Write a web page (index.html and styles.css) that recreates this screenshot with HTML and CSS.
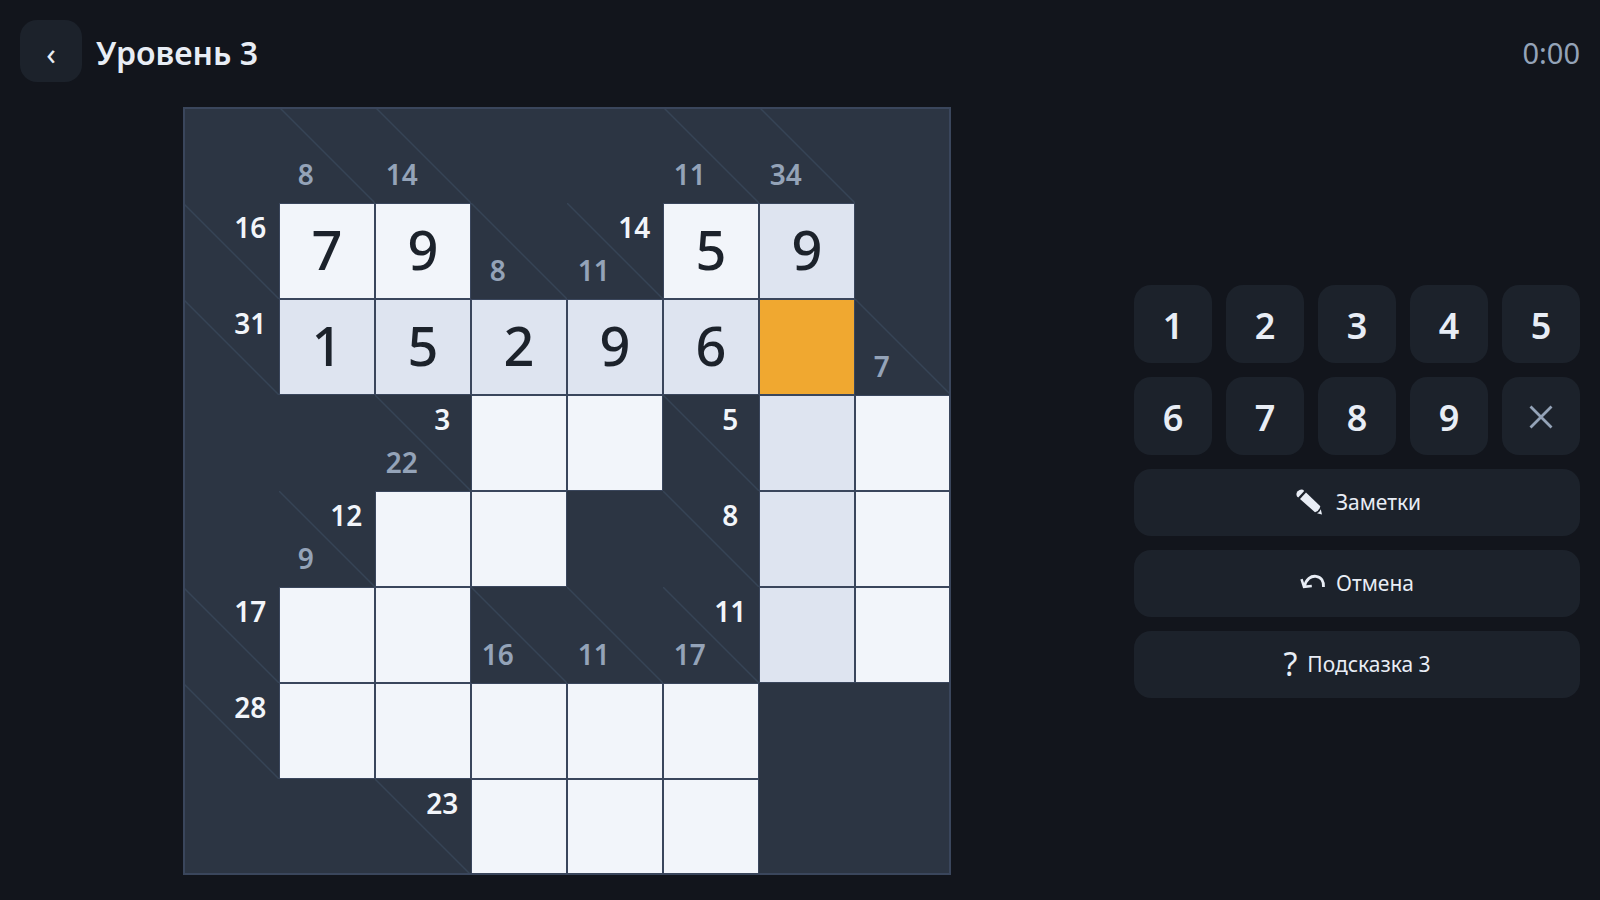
FILE: index.html
```html
<!DOCTYPE html>
<html lang="ru">

<head>
  <meta charset="utf-8">
  <meta name="viewport" content="width=device-width, initial-scale=1">
  <title>Какуро</title>
  <link rel="stylesheet" href="styles.css">
</head>

<body>
  <header class="topbar">
    <button class="back" aria-label="Назад">‹</button>
    <h1 class="title">Уровень 3</h1>
    <span class="timer">0:00</span>
  </header>

  <main class="game">
    <div class="board-wrap">
      <div id="board" class="board"></div>
    </div>

    <div class="controls">
      <div class="keypad">
        <button class="key">1</button>
        <button class="key">2</button>
        <button class="key">3</button>
        <button class="key">4</button>
        <button class="key">5</button>
        <button class="key">6</button>
        <button class="key">7</button>
        <button class="key">8</button>
        <button class="key">9</button>
        <button class="key erase" aria-label="Стереть">
          <svg width="24" height="24" viewBox="0 0 24 24">
            <path d="M1.500 1.500L22.500 22.500M22.500 1.500L1.500 22.500" fill="none" stroke="currentColor" stroke-width="2.8" />
          </svg>
        </button>
      </div>
      <button class="action">
        <svg width="33" height="28" viewBox="0 0 33 28">
          <g fill="currentColor" transform="translate(3 1)">
            <path d="M1 7.500Q-.5 4.500 1.700 2.200Q4 0 7 .8L8.200 1.900L2.200 8.500Z" />
            <path d="M10 3.500L24.300 17.200Q23.600 21.600 19 23.300L4 9.900Z" />
            <path d="M24.800 20.200L26 25.500L21 24.300Q23.800 23 24.800 20.200Z" />
          </g>
        </svg>
        Заметки
      </button>
      <button class="action">
        <svg width="26" height="26" viewBox="0 0 26 26">
          <g fill="none" stroke="currentColor" stroke-width="2.800">
            <path d="M4.500 16.500C6 9 11 5.700 16 6.300C21.500 7 23.800 11.500 23.500 17" />
            <path d="M1.500 9.200L4 16.800L11.800 16" stroke-width="2.500" />
          </g>
        </svg>
        Отмена
      </button>
      <button class="action">
        <span class="question">?</span>
        Подсказка 3
      </button>
    </div>
  </main>

  <script>
    // '#' wall, 'across\down' clue, '.' empty cell, digit = filled cell
    const rows = [
      '#    \\8  \\14   #    #     \\11   \\34 #',
      '16\\  7    9     \\8   14\\11 5      9    #',
      '31\\  1    5     2    9     6      .    \\7',
      '#    #    3\\22  .    .     5\\     .    .',
      '#    12\\9 .     .    #     8\\     .    .',
      '17\\  .    .     \\16  \\11   11\\17  .    .',
      '28\\  .    .     .    .     .      #    #',
      '#    #    23\\   .    .     .      #    #'
    ].map(row => row.split(/\s+/));

    const selected = { row: 2, col: 6 };
    const boardElt = document.querySelector('#board');

    // the run of open cells that goes through the selected one
    function inRun(r, c) {
      if (r !== selected.row && c !== selected.col) return false;
      let dr = Math.sign(selected.row - r);
      let dc = Math.sign(selected.col - c);
      while (r !== selected.row || c !== selected.col) {
        if (!/^[.\d]$/.test(rows[r][c])) return false;
        r += dr;
        c += dc;
      }
      return true;
    }

    function addClue(cell, name, text) {
      if (!text) return;
      let clue = document.createElement('span');
      clue.className = name;
      clue.textContent = text;
      cell.appendChild(clue);
    }

    rows.forEach((row, r) => row.forEach((value, c) => {
      let open = /^[.\d]$/.test(value);
      let cell = document.createElement(open ? 'button' : 'div');
      cell.className = open ? 'cell open' : 'cell';
      if (open) {
        cell.textContent = value === '.' ? '' : value;
        cell.setAttribute('aria-label', 'Строка ' + r + ', столбец ' + c);
        if (inRun(r, c)) cell.classList.add('run');
        if (r === selected.row && c === selected.col) cell.classList.add('selected');
      } else if (value !== '#') {
        let [across, down] = value.split('\\');
        cell.classList.add('clue');
        addClue(cell, 'across', across);
        addClue(cell, 'down', down);
      }
      boardElt.appendChild(cell);
    }));
  </script>
</body>

</html>
```
FILE: styles.css
```css
* {
  box-sizing: border-box;
}

body {
  margin: 0;
  padding: 20px;
  height: 100vh;
  display: flex;
  flex-direction: column;
  gap: 20px;
  background: #12151c;
  color: #e8edf5;
  font-family: "Segoe UI", "Noto Sans", sans-serif;
}

button {
  border: 0;
  padding: 0;
  background: #1c222b;
  color: inherit;
  font-family: inherit;
  border-radius: 17px;
  cursor: pointer;
}

.topbar {
  display: flex;
  align-items: center;
  gap: 14px;
}

.back {
  width: 62px;
  height: 62px;
  padding-top: 3px;
  font-size: 31px;
}

.title {
  margin: 0;
  padding-top: 3px;
  font-size: 32px;
  font-weight: 600;
  line-height: 44px;
}

.timer {
  margin-left: auto;
  padding-top: 3px;
  color: #94a3b8;
  font-size: 29px;
}

.game {
  flex: 1;
  min-height: 0;
  display: flex;
  align-items: center;
  gap: 20px;
}

.board-wrap {
  flex: 1;
  height: 100%;
  padding: 5px;
  display: flex;
  justify-content: center;
}

.board {
  height: 100%;
  aspect-ratio: 1;
  display: grid;
  grid-template: repeat(8, 1fr) / repeat(8, 1fr);
  background: #2c3543;
  outline: 2px solid #3a465c;
  outline-offset: -2px;
}

.cell {
  min-width: 0;
  min-height: 0;
}

.open {
  padding-bottom: 5px;
  border: 1px solid #3a465c;
  border-radius: 0;
  background: #f2f5fa;
  color: #1c222b;
  font-size: 54px;
  font-weight: 500;
  line-height: 60px;
}

.run {
  background: #dee4f0;
}

.selected {
  background: #f0a830;
}

.clue {
  display: grid;
  grid-template-rows: 50% 40%;
  align-items: center;
  text-align: center;
  font-size: 28px;
  font-weight: 600;
  line-height: 32px;
  background: linear-gradient(to top right, transparent 49%, #364456 50%, transparent 51%);
}

.across {
  grid-row: 1;
  justify-self: end;
  width: 60%;
  color: #f2f5fa;
}

.down {
  grid-row: 2;
  width: 56%;
  color: #94a3b8;
}

.controls {
  width: 446px;
  display: flex;
  flex-direction: column;
  gap: 14px;
}

.keypad {
  display: grid;
  grid-template-columns: repeat(5, 1fr);
  gap: 14px;
}

.key {
  height: 78px;
  padding-top: 3px;
  font-size: 36px;
  font-weight: 600;
}

.key svg {
  display: block;
  margin: auto;
}

.erase {
  color: #94a3b8;
}

.action {
  height: 67px;
  display: flex;
  align-items: center;
  justify-content: center;
  gap: 10px;
  font-size: 21px;
}

.question {
  font-size: 32px;
  line-height: 40px;
}
```
